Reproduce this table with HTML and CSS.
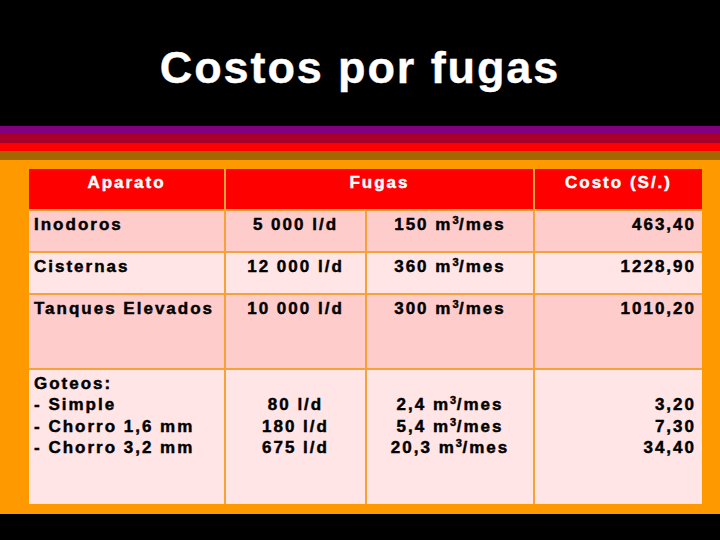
FILE: index.html
```html
<!DOCTYPE html>
<html lang="es">
<head>
<meta charset="utf-8">
<title>Costos por fugas</title>
<link rel="stylesheet" href="styles.css">
</head>
<body>
<div class="slide">
  <header class="title-bar">
    <h1 class="title">Costos por fugas</h1>
  </header>
  <div class="stripes">
    <div class="stripe stripe-purple"></div>
    <div class="stripe stripe-maroon"></div>
    <div class="stripe stripe-red"></div>
    <div class="stripe stripe-brown"></div>
  </div>
  <main class="panel">
    <div class="grid">
      <div class="cell head">Aparato</div>
      <div class="cell head span2">Fugas</div>
      <div class="cell head">Costo (S/.)</div>

      <div class="cell dark left">Inodoros</div>
      <div class="cell dark center">5 000 l/d</div>
      <div class="cell dark center">150 m<sup>3</sup>/mes</div>
      <div class="cell dark right">463,40</div>

      <div class="cell light left">Cisternas</div>
      <div class="cell light center">12 000 l/d</div>
      <div class="cell light center">360 m<sup>3</sup>/mes</div>
      <div class="cell light right">1228,90</div>

      <div class="cell dark left">Tanques Elevados</div>
      <div class="cell dark center">10 000 l/d</div>
      <div class="cell dark center">300 m<sup>3</sup>/mes</div>
      <div class="cell dark right">1010,20</div>

      <div class="cell light left">Goteos:<br>- Simple<br>- Chorro 1,6 mm<br>- Chorro 3,2 mm</div>
      <div class="cell light center"><br>80 l/d<br>180 l/d<br>675 l/d</div>
      <div class="cell light center"><br>2,4 m<sup>3</sup>/mes<br>5,4 m<sup>3</sup>/mes<br>20,3 m<sup>3</sup>/mes</div>
      <div class="cell light right"><br>3,20<br>7,30<br>34,40</div>
    </div>
  </main>
  <div class="bottom-bar"></div>
</div>
</body>
</html>
```
FILE: styles.css
```css
html, body {
  margin: 0;
  padding: 0;
  background: #000;
}

.slide {
  width: 720px;
  height: 540px;
  overflow: hidden;
  display: flex;
  flex-direction: column;
  background: #000;
  font-family: "Liberation Sans", Arial, sans-serif;
}

.title-bar {
  height: 126px;
  box-sizing: border-box;
  padding-top: 42px;
}

.title {
  margin: 0;
  text-align: center;
  color: #fff;
  font-size: 45px;
  line-height: 52px;
  font-weight: bold;
  letter-spacing: 1.9px;
  -webkit-text-stroke: 0.4px #fff;
}

.stripes {
  display: flex;
  flex-direction: column;
}

.stripe { width: 100%; }
.stripe-purple { height: 8px; background: #800080; }
.stripe-maroon { height: 9px; background: #a8002a; }
.stripe-red { height: 8px; background: #ff0000; }
.stripe-brown { height: 9px; background: #a36600; }

.panel {
  background: #ff9900;
  height: 354px;
  box-sizing: border-box;
  padding: 9px 18px 10px 29px;
}

.grid {
  display: grid;
  grid-template-columns: 195px 139px 166px 167px;
  grid-template-rows: 40px 40px 40px 73px 134px;
  gap: 2px;
  background: #f7a238;
  width: 673px;
}

.cell {
  box-sizing: border-box;
  padding: 3px 6px 0 6px;
  font-size: 17px;
  line-height: 21.3px;
  font-weight: bold;
  letter-spacing: 2px;
  color: #000;
  -webkit-text-stroke: 0.45px #000;
}

.cell sup {
  font-size: 11px;
  line-height: 0;
  vertical-align: 6px;
  letter-spacing: 0.5px;
}

.head {
  background: #ff0000;
  color: #fff;
  text-align: center;
  -webkit-text-stroke: 0.45px #fff;
}

.span2 { grid-column: span 2; }

.dark { background: #ffcccc; }
.light { background: #ffe5e5; }

.left { text-align: left; padding-left: 5px; }
.center { text-align: center; }
.right { text-align: right; padding-right: 6px; }

.bottom-bar {
  flex: 1;
  background: #000;
}
```
